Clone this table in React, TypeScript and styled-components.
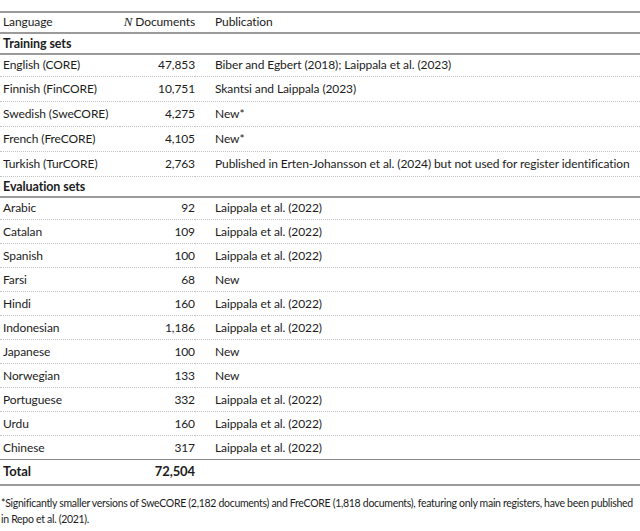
import React from 'react';
import styled, { createGlobalStyle } from 'styled-components';

const GlobalStyle = createGlobalStyle`
  html, body {
    margin: 0;
    padding: 0;
    background: #ffffff;
  }
  body {
    font-family: 'Lato', 'Noto Sans', sans-serif;
    color: #1c1c1c;
  }
`;

const Page = styled.div`
  width: 640px;
  padding-top: 11px;
  overflow: hidden;
`;

const Table = styled.table`
  width: 100%;
  table-layout: fixed;
  border-collapse: collapse;
  font-size: 12px;
  letter-spacing: -0.09px;
  border-top: 2px solid #9a9a9a;
`;

const HeadCell = styled.th<{ $align?: 'left' | 'right' }>`
  font-weight: 400;
  text-align: ${({ $align }) => $align || 'left'};
  height: 17px;
  padding: 0 0 2px ${({ $align }) => ($align === 'right' ? '0' : '3px')};
  border-bottom: 2px solid #9a9a9a;
  white-space: nowrap;
`;

const SectionCell = styled.td`
  font-weight: 700;
  font-size: 12.5px;
  height: 18px;
  padding: 0 0 1px 3px;
  border-bottom: 2px solid #9a9a9a;
`;

const Cell = styled.td<{ $align?: 'left' | 'right'; $last?: boolean; $height: number; $lift: number }>`
  text-align: ${({ $align }) => $align || 'left'};
  height: ${({ $height, $lift }) => $height - $lift}px;
  padding: 0 0 ${({ $lift }) => $lift}px ${({ $align }) => ($align === 'right' ? '0' : '3px')};
  border-bottom: ${({ $last }) => ($last ? '1px solid #8a8a8a' : '1px dotted #c4c4c4')};
  white-space: nowrap;
`;

const PubCell = styled(Cell)`
  padding-left: 20px;
`;

const TotalCell = styled.td<{ $align?: 'left' | 'right' }>`
  text-align: ${({ $align }) => $align || 'left'};
  height: 21px;
  padding: 0 0 3px ${({ $align }) => ($align === 'right' ? '0' : '3px')};
  font-weight: 700;
  font-size: 13px;
  border-bottom: 2px solid #9a9a9a;
`;

const PubHead = styled(HeadCell)`
  padding-left: 20px;
`;

const MathN = styled.i`
  font-family: 'Liberation Serif', serif;
  font-size: 13px;
`;

const Footnote = styled.p`
  margin: 9px 0 0 0;
  padding-left: 1px;
  font-size: 10.5px;
  letter-spacing: -0.3px;
  line-height: 16px;
  white-space: nowrap;
`;

type Row = { lang: string; n: string; pub: string };

const training: Row[] = [
  { lang: 'English (CORE)', n: '47,853', pub: 'Biber and Egbert (2018); Laippala et al. (2023)' },
  { lang: 'Finnish (FinCORE)', n: '10,751', pub: 'Skantsi and Laippala (2023)' },
  { lang: 'Swedish (SweCORE)', n: '4,275', pub: 'New*' },
  { lang: 'French (FreCORE)', n: '4,105', pub: 'New*' },
  {
    lang: 'Turkish (TurCORE)',
    n: '2,763',
    pub: 'Published in Erten-Johansson et al. (2024) but not used for register identification',
  },
];

const evaluation: Row[] = [
  { lang: 'Arabic', n: '92', pub: 'Laippala et al. (2022)' },
  { lang: 'Catalan', n: '109', pub: 'Laippala et al. (2022)' },
  { lang: 'Spanish', n: '100', pub: 'Laippala et al. (2022)' },
  { lang: 'Farsi', n: '68', pub: 'New' },
  { lang: 'Hindi', n: '160', pub: 'Laippala et al. (2022)' },
  { lang: 'Indonesian', n: '1,186', pub: 'Laippala et al. (2022)' },
  { lang: 'Japanese', n: '100', pub: 'New' },
  { lang: 'Norwegian', n: '133', pub: 'New' },
  { lang: 'Portuguese', n: '332', pub: 'Laippala et al. (2022)' },
  { lang: 'Urdu', n: '160', pub: 'Laippala et al. (2022)' },
  { lang: 'Chinese', n: '317', pub: 'Laippala et al. (2022)' },
];

// first row of each section sits a little tighter under the rule
const DataRows: React.FC<{ rows: Row[]; rowHeight: number; lastSolid?: boolean }> = ({
  rows,
  rowHeight,
  lastSolid,
}) => (
  <>
    {rows.map((r, i) => {
      const last = lastSolid && i === rows.length - 1;
      const h = i === 0 ? 21 : rowHeight;
      const lift = i === 0 ? 2 : 1;
      return (
        <tr key={r.lang}>
          <Cell $last={last} $height={h} $lift={lift}>{r.lang}</Cell>
          <Cell $align="right" $last={last} $height={h} $lift={lift}>{r.n}</Cell>
          <PubCell $last={last} $height={h} $lift={lift}>{r.pub}</PubCell>
        </tr>
      );
    })}
  </>
);

export default function App() {
  return (
    <Page>
      <GlobalStyle />
      <Table>
        <colgroup>
          <col style={{ width: 120 }} />
          <col style={{ width: 75 }} />
          <col />
        </colgroup>
        <thead>
          <tr>
            <HeadCell>Language</HeadCell>
            <HeadCell $align="right">
              <MathN>N</MathN> Documents
            </HeadCell>
            <PubHead>Publication</PubHead>
          </tr>
        </thead>
        <tbody>
          <tr>
            <SectionCell colSpan={3}>Training sets</SectionCell>
          </tr>
          <DataRows rows={training} rowHeight={24} />
          <tr>
            <SectionCell colSpan={3}>Evaluation sets</SectionCell>
          </tr>
          <DataRows rows={evaluation} rowHeight={23} lastSolid />
          <tr>
            <TotalCell>Total</TotalCell>
            <TotalCell $align="right">72,504</TotalCell>
            <TotalCell />
          </tr>
        </tbody>
      </Table>
      <Footnote>
        *Significantly smaller versions of SweCORE (2,182 documents) and FreCORE (1,818 documents), featuring only main
        registers, have been published
        <br />
        in Repo et al. (2021).
      </Footnote>
    </Page>
  );
}
